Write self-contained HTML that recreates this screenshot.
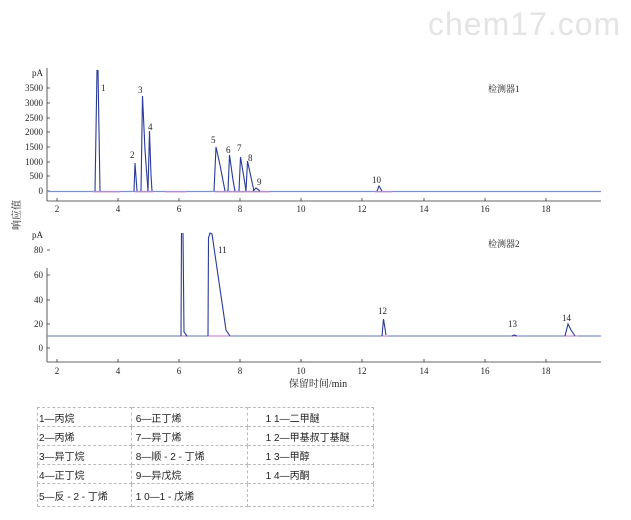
<!DOCTYPE html>
<html><head><meta charset="utf-8"><style>
body{margin:0;background:#fff;width:631px;height:520px;overflow:hidden;position:relative;font-family:"Liberation Serif","Noto Serif CJK SC",serif}
.wm{position:absolute;left:428px;top:6px;font:32px "Liberation Sans",sans-serif;color:#e4e4e4;letter-spacing:1px}
table{position:absolute;left:37px;top:407px;border-collapse:collapse;font:10px "Liberation Sans","Noto Sans CJK SC",sans-serif;color:#222}
td{border:1px dashed #bbb;padding:0 0 0 1px;height:18px;vertical-align:middle}
</style></head><body>
<div class="wm">chem17.com</div>
<svg width="631" height="520" style="position:absolute;left:0;top:0" font-family="Liberation Serif, Noto Serif CJK SC, serif" font-size="9" fill="#222">
<!-- top chart axes -->
<g stroke="#333" stroke-width="0.8" fill="none">
<line x1="47" y1="68" x2="47" y2="201"/><line x1="47" y1="201" x2="601" y2="201"/>
<line x1="47" y1="268" x2="47" y2="362"/><line x1="47" y1="362" x2="601" y2="362"/>
</g>
<g stroke="#333" stroke-width="0.8">
<path d="M57 201v-3M118 201v-3M179 201v-3M240 201v-3M301 201v-3M362 201v-3M424 201v-3M485 201v-3M546 201v-3"/>
<path d="M57 362v-3M118 362v-3M179 362v-3M240 362v-3M301 362v-3M362 362v-3M424 362v-3M485 362v-3M546 362v-3"/>
<path d="M47 88h3M47 103h3M47 118h3M47 132h3M47 147h3M47 162h3M47 176h3M47 191h3"/>
<path d="M47 250h3M47 275h3M47 300h3M47 324h3M47 348h3"/>
</g>
<g text-anchor="end">
<text x="43" y="76">pA</text><text x="43" y="91">3500</text><text x="43" y="106">3000</text><text x="43" y="121">2500</text><text x="43" y="135">2000</text><text x="43" y="150">1500</text><text x="43" y="165">1000</text><text x="43" y="179">500</text><text x="43" y="194">0</text>
<text x="43" y="238">pA</text><text x="43" y="253">80</text><text x="43" y="278">60</text><text x="43" y="303">40</text><text x="43" y="327">20</text><text x="43" y="351">0</text>
</g>
<g text-anchor="middle">
<text x="57" y="212">2</text><text x="118" y="212">4</text><text x="179" y="212">6</text><text x="240" y="212">8</text><text x="301" y="212">10</text><text x="362" y="212">12</text><text x="424" y="212">14</text><text x="485" y="212">16</text><text x="546" y="212">18</text>
<text x="57" y="374">2</text><text x="118" y="374">4</text><text x="179" y="374">6</text><text x="240" y="374">8</text><text x="301" y="374">10</text><text x="362" y="374">12</text><text x="424" y="374">14</text><text x="485" y="374">16</text><text x="546" y="374">18</text>
<text x="318" y="387" font-size="10">保留时间/min</text>
</g>
<text x="20" y="215" font-size="10" transform="rotate(-90 20 215)" text-anchor="middle">响应值</text>
<text x="488" y="92" font-size="9">检测器1</text>
<text x="488" y="247" font-size="9">检测器2</text>
<!-- baselines -->
<line x1="47" y1="191.5" x2="601" y2="191.5" stroke="#8090c8" stroke-width="1.2"/>
<line x1="47" y1="336" x2="601" y2="336" stroke="#8090c8" stroke-width="1.2"/>
<g stroke="#e090d0" stroke-width="1"><path d="M93 192H120M135 192H153M165 192H186M215 192H270M375 192H392"/><path d="M182 336H185M208 336H230M382 336H388M512 336H518M565 336H578"/></g>
<g stroke="#2a3a9a" stroke-width="1.1" fill="none">
<path d="M95 191L97 70M98 70L100 191"/>
<path d="M134 191L135 163L137 191"/>
<path d="M141 191L142.5 96L145 150L148 191"/>
<path d="M148 191L149.5 131L151 175L152 191"/>
<path d="M214 191L216 147L220 165L225 191"/>
<path d="M228 191L229.5 155L233 180L235 191"/>
<path d="M239 191L240.5 157L244 178L246 191"/>
<path d="M246 191L247.5 161L252 182L254 191"/>
<path d="M253 191L256 188L260 191"/>
<path d="M377 191L379 186L382 191"/>
<path d="M181 336L181.5 233M183 233L184 332L187 336"/>
<path d="M208 336L208.5 238L210 233L212 234L226 330L230 336"/>
<path d="M382 336L383.5 319L386 335"/>
<path d="M512 336L514 335L517 336"/>
<path d="M565 336L568 324L571 330L575 336"/>
</g>
<g font-size="9">
<text x="101" y="91">1</text><text x="130" y="158">2</text><text x="138" y="93">3</text><text x="148" y="130">4</text><text x="211" y="143">5</text><text x="226" y="153">6</text><text x="237" y="151">7</text><text x="248" y="161">8</text><text x="257" y="185">9</text><text x="372" y="183">10</text>
<text x="218" y="253">11</text><text x="378" y="314">12</text><text x="508" y="327">13</text><text x="562" y="321">14</text>
</g>
</svg>
<table>
<tr><td style="width:92px">1—丙烷</td><td style="width:114px">&nbsp;6—正丁烯</td><td style="width:124px">&nbsp;&nbsp;&nbsp;&nbsp;&nbsp;&nbsp;1 1—二甲醚</td></tr>
<tr><td>2—丙烯</td><td>&nbsp;7—异丁烯</td><td>&nbsp;&nbsp;&nbsp;&nbsp;&nbsp;&nbsp;1 2—甲基叔丁基醚</td></tr>
<tr><td>3—异丁烷</td><td>&nbsp;8—顺 - 2 - 丁烯</td><td>&nbsp;&nbsp;&nbsp;&nbsp;&nbsp;&nbsp;1 3—甲醇</td></tr>
<tr><td>4—正丁烷</td><td>&nbsp;9—异戊烷</td><td>&nbsp;&nbsp;&nbsp;&nbsp;&nbsp;&nbsp;1 4—丙酮</td></tr>
<tr><td style="height:22px">5—反 - 2 - 丁烯</td><td>&nbsp;1 0—1 - 戊烯</td><td></td></tr>
</table>
</body></html>
